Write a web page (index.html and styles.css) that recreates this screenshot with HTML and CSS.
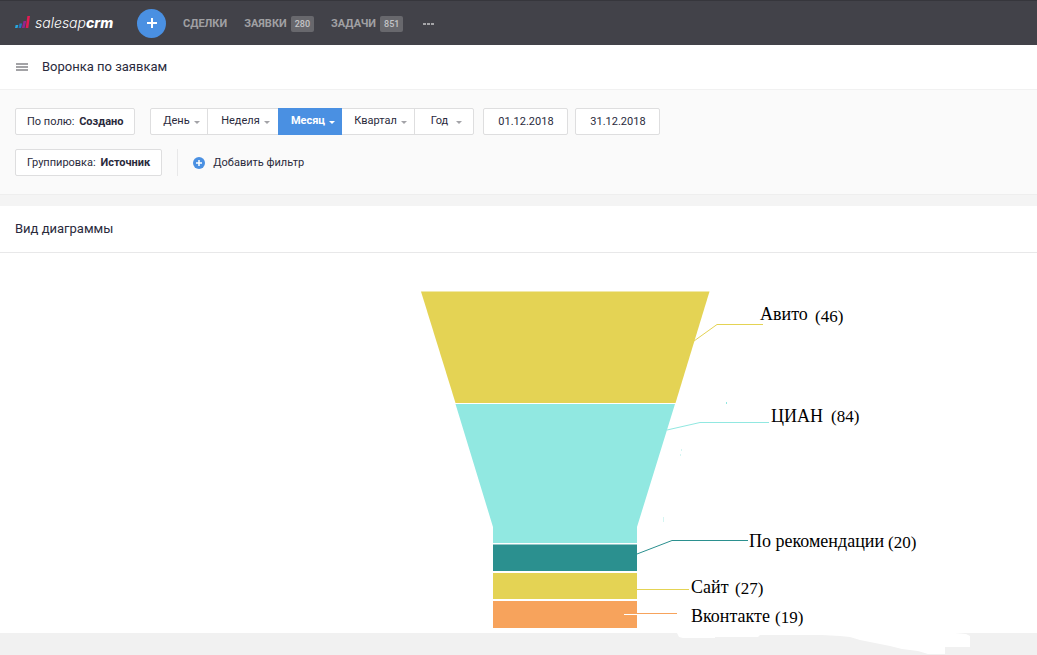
FILE: index.html
```html
<!DOCTYPE html>
<html lang="ru">
<head>
<meta charset="utf-8">
<meta name="viewport" content="width=device-width, initial-scale=1">
<title>Воронка по заявкам</title>
<link rel="stylesheet" href="styles.css">
</head>
<body>
<header class="topbar">
  <a class="logo" href="#">
    <svg class="logo-mark" width="16" height="14" viewBox="0 0 16 14" aria-hidden="true">
      <path d="M.700 10h2.600l-.8 3H0z" fill="#28a9e0"/>
      <path d="M4.500 8.500h2.600L6 13H3.500z" fill="#2374bd"/>
      <path d="M8.500 6h2.700L9.600 13H7z" fill="#93268f"/>
      <path d="M12.400 1H15l-1.700 12h-2.600z" fill="#e31b54"/>
    </svg>
    <span class="logo-text">salesap<b>crm</b></span>
  </a>
  <button class="add" type="button" aria-label="Добавить">
    <svg width="12" height="12" viewBox="0 0 12 12"><path d="M6 1v10M1 6h10" stroke="#fff" stroke-width="2"/></svg>
  </button>
  <nav class="nav">
    <a href="#">СДЕЛКИ</a>
    <a href="#">ЗАЯВКИ <span class="badge">280</span></a>
    <a href="#">ЗАДАЧИ <span class="badge">851</span></a>
    <button class="more" type="button" aria-label="Ещё">
      <svg width="12" height="2" viewBox="0 0 12 2"><path d="M0 0h3v2H0zM4 0h3v2H4zM8 0h3v2H8z" fill="#a5a5a8"/></svg>
    </button>
  </nav>
</header>

<div class="titlebar">
  <button class="menu" type="button" aria-label="Меню">
    <svg width="12" height="8" viewBox="0 0 12 8"><path d="M0 0h12v2H0zM0 3h12v2H0zM0 6h12v2H0z" fill="#a3a3a6"/></svg>
  </button>
  <h1>Воронка по заявкам</h1>
</div>

<section class="filters">
  <div class="row">
    <button class="box" type="button">По полю: <b>Создано</b></button>
    <div class="periods">
      <button type="button">День <i class="caret"></i></button>
      <button class="week" type="button">Неделя <i class="caret"></i></button>
      <button class="active" type="button">Месяц <i class="caret"></i></button>
      <button class="quarter" type="button">Квартал <i class="caret"></i></button>
      <button class="year" type="button">Год <i class="caret"></i></button>
    </div>
    <input class="date" type="text" value="01.12.2018" aria-label="Дата начала">
    <input class="date" type="text" value="31.12.2018" aria-label="Дата окончания">
  </div>
  <div class="row">
    <button class="box" type="button">Группировка: <b>Источник</b></button>
    <div class="add-filter">
      <button type="button">
        <svg width="12" height="12" viewBox="0 0 12 12" aria-hidden="true"><circle cx="6" cy="6" r="6" fill="#4a90e2"/><path d="M6 3v6M3 6h6" stroke="#fff" stroke-width="1.500"/></svg>
        Добавить фильтр
      </button>
    </div>
  </div>
</section>

<h2 class="section-title">Вид диаграммы</h2>

<main class="chart">
  <svg class="funnel" viewBox="0 253 1037 402" role="img" aria-label="Воронка по источникам заявок">
    <path class="floor" d="M0 633H677L679 637 683 638H715V637H758L760 635H822L840 636 850 637 860 640 875 643 890 646 902 649 918 651 928 654H945V647H970V636L966 634 955 633H1037V655H0z"/>
    <path class="yellow" d="M421 291.500h288.500L675.500 403h-220z"/>
    <path class="aqua" d="M455.500 404h219.500L637 527v16H493v-16z"/>
    <path class="teal" d="M493 544.500h144V571H493z"/>
    <path class="yellow" d="M493 573h144v26H493z"/>
    <path class="orange" d="M493 601h144v27H493z"/>
    <g class="lines">
      <path stroke="#e4d354" d="M694 341l23-16.500h46"/>
      <path stroke="#91e8e1" d="M667 430l33-7.500h69M726.500 402v2"/>
      <path stroke="#d5f5f2" d="M663.500 517v5M681.500 449v2M680.500 454v2"/>
      <path stroke="#2b908f" d="M637 554l35-13.500h76"/>
      <path stroke="#e4d354" d="M637 589.500h52"/>
      <path stroke="#f7a35c" d="M637 613.500h40"/>
      <path stroke="#fff" d="M624 614.500h13"/>
    </g>
    <g class="labels">
      <text x="760" y="320">Авито</text><text class="count" x="815" y="322">(46)</text>
      <text x="771" y="422">ЦИАН</text><text class="count" x="831" y="422">(84)</text>
      <text x="749" y="547">По рекомендации</text><text class="count" x="888" y="548">(20)</text>
      <text x="691" y="593">Сайт</text><text class="count" x="735" y="594">(27)</text>
      <text x="691" y="622">Вконтакте</text><text class="count" x="775" y="623">(19)</text>
    </g>
  </svg>
</main>
</body>
</html>
```

FILE: styles.css
```css
* { box-sizing: border-box; }
body {
  margin: 0;
  background: #f4f4f4;
  color: #2a2a3c;
  font: 11px/16px Roboto, "Open Sans", sans-serif;
}
button, input { font: inherit; color: inherit; }
button { padding: 0; border: 0; background: none; cursor: pointer; }
a { color: inherit; text-decoration: none; }
svg { display: block; flex: none; }

.topbar {
  display: flex;
  align-items: center;
  height: 45px;
  padding-left: 15px;
  border-top: 1px solid #36363c;
  background: #424249;
}
.logo { display: flex; align-items: center; gap: 4px; width: 122px; color: #fff; }
.logo-mark { margin-bottom: 2px; }
.logo-text { font: italic 300 14px/20px Inter, sans-serif; }
.logo-text b { font-weight: 800; }
.add {
  display: grid;
  place-items: center;
  width: 29px;
  height: 29px;
  border-radius: 50%;
  background: #4a90e2;
}
.nav {
  display: flex;
  align-items: center;
  gap: 17px;
  margin-left: 17px;
  padding-top: 1px;
  color: #a0a0a3;
  font-weight: 700;
}
.nav a { display: flex; align-items: center; gap: 4px; }
.badge {
  padding: 0 4px;
  border-radius: 2px;
  background: #68686d;
  color: #c4c4c7;
  font-size: 9px;
  font-weight: 500;
}
.more { margin-left: 3px; }

.titlebar {
  display: flex;
  align-items: center;
  gap: 14px;
  height: 45px;
  padding: 0 16px;
  border-bottom: 1px solid #f1f1f1;
  background: #fff;
}
h1, h2 { margin: 0; font-size: 13px; font-weight: 400; }

.filters {
  display: flex;
  flex-direction: column;
  gap: 14px;
  padding: 18px 15px;
  border-bottom: 1px solid #eee;
  background: #fafafa;
}
.row { display: flex; flex-wrap: wrap; }
.box, .date, .periods {
  height: 27px;
  border: 1px solid #dededf;
  border-radius: 2px;
  background: #fff;
}
.box { padding: 0 11px; white-space: nowrap; }
.box b { margin-left: 2px; }
.periods { display: flex; margin: 0 9px 0 15px; }
.periods button {
  display: flex;
  align-items: center;
  justify-content: center;
  gap: 4px;
  width: 56px;
  padding: 0 0 2px 4px;
}
.periods button + button { border-left: 1px solid #dededf; }
.periods .week { width: 71px; }
.periods .active {
  width: 64px;
  margin: -1px 0;
  border-color: #4a90e2;
  background: #4a90e2;
  color: #fff;
  font-weight: 700;
}
.periods .quarter { width: 72px; border-left: 0; }
.periods .year { width: 59px; gap: 8px; }
.caret {
  margin-top: 3px;
  border: 3px solid transparent;
  border-top-color: #a3a3a8;
  border-bottom: 0;
}
.active .caret { border-top-color: #fff; }
.date { width: 85px; margin-right: 7px; padding: 0; text-align: center; }
.add-filter { margin-left: 15px; padding-left: 15px; border-left: 1px solid #e8e8e9; }
.add-filter button { display: flex; align-items: center; gap: 8px; height: 27px; }

.section-title {
  margin-top: 11px;
  padding: 15px;
  border-bottom: 1px solid #e8e8e9;
  background: #fff;
}
.chart { background: #fff; }
.funnel { width: 100%; height: auto; }
.floor { fill: #f1f1f1; }
.yellow { fill: #e4d354; }
.aqua { fill: #91e8e1; }
.teal { fill: #2b908f; }
.orange { fill: #f7a35c; }
.lines { fill: none; stroke-width: 1; }
.labels { fill: #000; font: 18px "Liberation Serif", serif; }
.count { font-size: 17px; }
```
